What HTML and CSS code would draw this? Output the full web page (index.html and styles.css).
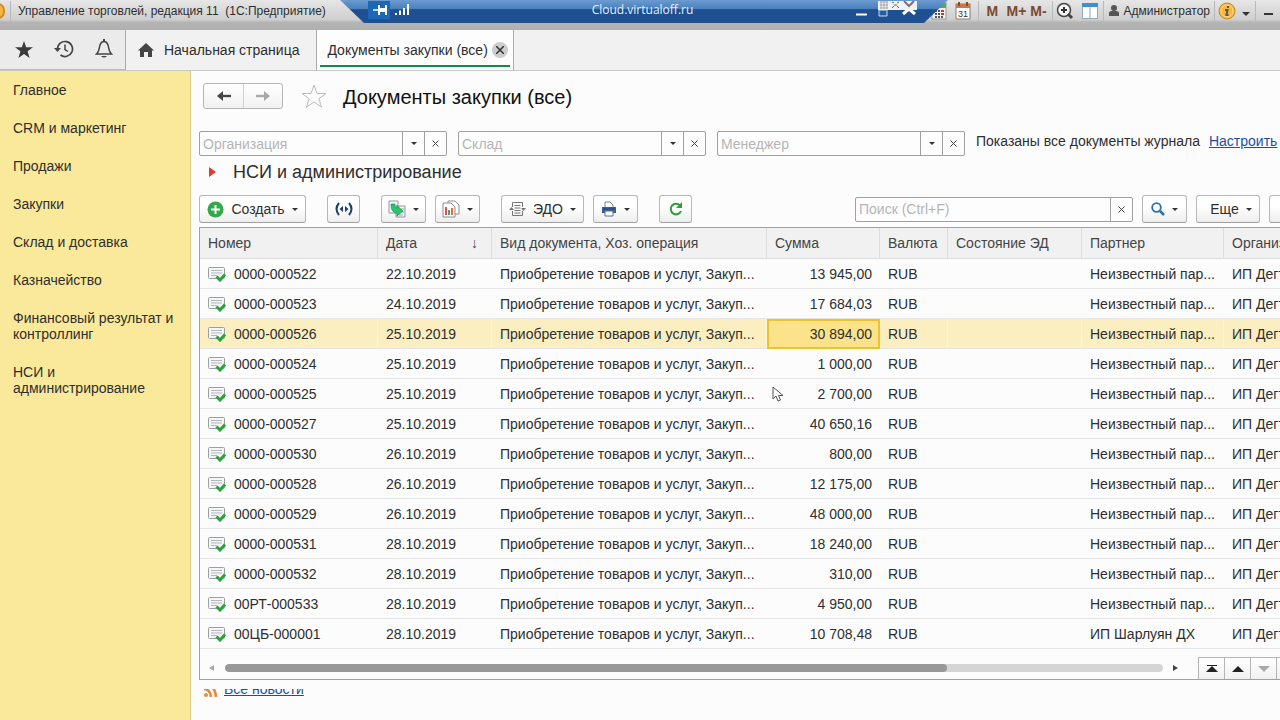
FILE: index.html
```html
<!DOCTYPE html>
<html lang="ru">
<head>
<meta charset="utf-8">
<title>Документы закупки (все)</title>
<link rel="stylesheet" href="styles.css">
<script src="app.js" defer></script>
</head>
<body>
<header class="titlebar">
  <span class="app-logo"></span>
  <span class="divider"></span>
  <span class="app-title">Управление торговлей, редакция 11&nbsp; (1С:Предприятие)</span>
  <div class="tools">
    <button class="tool" aria-label="Калькулятор"><svg width="16" height="18" viewBox="0 0 16 18"><rect x="1" y="1" width="14" height="16" fill="#f3f3f3" stroke="#999"/><path d="M2 1h13v5H2z" fill="#43b649"/><path d="M4 9h2M7 9h2M4 12h2M7 12h2M4 15h2M7 15h2M10 15h2" stroke="#555" stroke-width="2"/><path d="M10 9h3M10 12h3" stroke="#c33" stroke-width="2"/></svg></button>
    <button class="tool" aria-label="Календарь"><svg width="16" height="18" viewBox="0 0 16 18"><rect x="1" y="2" width="14" height="15" fill="#fff" stroke="#8a7a70"/><path d="M1 2h14v4H1z" fill="#c9794a"/><path d="M4 0v4M12 0v4" stroke="#8b4a25" stroke-width="2"/><text x="8" y="15" class="cal-day">31</text></svg></button>
    <span class="divider spaced"></span>
    <button class="tool memory first">M</button>
    <button class="tool memory">M+</button>
    <button class="tool memory">M-</button>
    <span class="divider spaced"></span>
    <button class="tool" aria-label="Масштаб"><svg width="18" height="18" viewBox="0 0 18 18"><circle cx="8" cy="8" r="6.500" fill="#f5f5f5" stroke="#444" stroke-width="1.500"/><path d="M5 8h6M8 5v6" stroke="#333" stroke-width="2"/><path d="M12 12l4 4" stroke="#444" stroke-width="3"/></svg></button>
    <button class="tool panel" aria-label="Панели"><svg width="16" height="16" viewBox="0 0 16 16"><path d="M.5.5h15v15H.5z" fill="#fff" stroke="#8fa9bd"/><path d="M0 0h16v4H0z" fill="#3f8fd0"/><path d="M8 4v12" stroke="#8fa9bd"/></svg></button>
    <span class="divider"></span>
    <button class="user"><svg width="10" height="12" viewBox="0 0 10 12"><circle cx="5" cy="3" r="3" fill="#555"/><path d="M0 11V8q0-2 3-2h4q3 0 3 2v3z" fill="#555"/></svg>Администратор</button>
    <span class="divider"></span>
    <button class="tool" aria-label="О программе"><svg width="18" height="18" viewBox="0 0 18 18"><circle cx="9" cy="9" r="8" fill="#f4b840" stroke="#c58a20"/><circle cx="9" cy="9" r="6" fill="none" stroke="#fbdc8b"/><path d="M7 8h2.500l-1 5h2M10 4v2" fill="none" stroke="#5d5a55" stroke-width="2"/></svg></button>
    <button class="tool narrow" aria-label="Меню"><span class="caret big"></span></button>
    <span class="divider spaced"></span>
    <button class="tool" aria-label="Свернуть"><span class="minimise"></span></button>
  </div>
  <div class="remote">
    <svg class="pins" width="44" height="18" viewBox="0 0 44 18"><path d="M0 0h22v18H0z" fill="#1c68b4"/><path d="M5 9h6" stroke="#fff" stroke-width="1.500"/><path d="M11 4v10M18 4v10" stroke="#fff" stroke-width="2"/><path d="M11 7h7v4h-7z" fill="#fff"/><path d="M28 14v-2M32 14V9.500M36 14V7M40 14V3" stroke="#fff" stroke-width="2"/></svg>
    <span class="remote-name">Cloud.virtualoff.ru</span>
    <svg class="remote-controls" width="70" height="18" viewBox="0 0 70 18"><path d="M3 13.500h11" stroke="#fff" stroke-width="2"/><path d="M26 9h8v6h-8z" fill="#2360a6" stroke="#c9dcf0"/><path d="M50 13l6-5 6 5" fill="none" stroke="#fff" stroke-width="3"/><path d="M25 0h39v9H25z" fill="#f2f2f2"/><path d="M27 1h8M27 4h8M27 7h8M28 0v8M31 0v8M34 0v8" stroke="#a9a9a9"/><path d="M39 1l2 1M46 1l-2 1M39 7l2-2M46 7l-2-2M41 4h3" stroke="#666"/><path d="M51 0l5 5 5-5" fill="none" stroke="#777" stroke-width="2"/></svg>
  </div>
</header>

<nav class="tabbar">
  <div class="quick">
    <button aria-label="Избранное"><svg width="18" height="17" viewBox="0 0 18 17"><path d="M9 0l2.200 6.200H18l-5.400 4 2 6.800L9 13l-5.600 4 2-6.800L0 6.200h6.800z" fill="#3c3c3c"/></svg></button>
    <button aria-label="История"><svg width="20" height="18" viewBox="0 0 20 18"><path d="M3.500 9a7.500 7.500 0 1 1 3 6" fill="none" stroke="#444" stroke-width="1.700"/><path d="M0 8h7l-3.500 4z" fill="#444"/><path d="M11 4.500V9.500l3 2" fill="none" stroke="#444" stroke-width="1.500"/></svg></button>
    <button aria-label="Уведомления"><svg width="18" height="20" viewBox="0 0 18 20"><path d="M1.500 15c3-2.500 2.500-6 3.500-9 .8-2.500 2-3.500 4-3.500s3.200 1 4 3.500c1 3 .5 6.500 3.500 9z" fill="none" stroke="#444" stroke-width="1.500"/><path d="M9 3V0" stroke="#444" stroke-width="2"/><path d="M6 17h6q-3 3-6 0" fill="#444"/></svg></button>
  </div>
  <a class="tab" href="#home"><svg width="16" height="14" viewBox="0 0 16 14"><path d="M8 0l8 7.500h-2V14h-4V9H6v5H2V7.500H0z" fill="#444"/></svg>Начальная страница</a>
  <div class="tab active"><a href="#docs">Документы закупки (все)</a><button class="close" aria-label="Закрыть"><svg width="8" height="8" viewBox="0 0 8 8"><path d="M0 0l8 8M8 0L0 8" stroke="#333" stroke-width="1.500"/></svg></button></div>
</nav>

<div class="workspace">
  <aside class="sidebar">
    <a href="#1">Главное</a>
    <a href="#2">CRM и маркетинг</a>
    <a href="#3">Продажи</a>
    <a href="#4">Закупки</a>
    <a href="#5">Склад и доставка</a>
    <a href="#6">Казначейство</a>
    <a href="#7">Финансовый результат и контроллинг</a>
    <a href="#8">НСИ и администрирование</a>
  </aside>

  <main class="content">
    <div class="heading">
      <div class="history">
        <button aria-label="Назад"><svg width="14" height="10" viewBox="0 0 14 10"><path d="M14 5H4" stroke="#444" stroke-width="2.400"/><path d="M0 5l6-5v10z" fill="#444"/></svg></button>
        <button aria-label="Вперед"><svg width="14" height="10" viewBox="0 0 14 10"><path d="M0 5h10" stroke="#a8a8a8" stroke-width="2.400"/><path d="M14 5L8 0v10z" fill="#a8a8a8"/></svg></button>
      </div>
      <button class="favorite" aria-label="В избранное"><svg width="26" height="24" viewBox="0 0 26 24"><path d="M13 1l3 8.500h9l-7.200 5.300 2.800 8.400L13 18l-7.600 5.200 2.800-8.400L1 9.500h9z" fill="none" stroke="#bbb"/></svg></button>
      <h1>Документы закупки (все)</h1>
    </div>

    <div class="filters">
      <div class="field"><input type="text" placeholder="Организация" aria-label="Организация"><button aria-label="Выбрать"><span class="caret"></span></button><button aria-label="Очистить"><svg width="7" height="7" viewBox="0 0 7 7"><path d="M.5.5l6 6M6.500.5l-6 6" stroke="#444"/></svg></button></div>
      <div class="field"><input type="text" placeholder="Склад" aria-label="Склад"><button aria-label="Выбрать"><span class="caret"></span></button><button aria-label="Очистить"><svg width="7" height="7" viewBox="0 0 7 7"><path d="M.5.5l6 6M6.500.5l-6 6" stroke="#444"/></svg></button></div>
      <div class="field"><input type="text" placeholder="Менеджер" aria-label="Менеджер"><button aria-label="Выбрать"><span class="caret"></span></button><button aria-label="Очистить"><svg width="7" height="7" viewBox="0 0 7 7"><path d="M.5.5l6 6M6.500.5l-6 6" stroke="#444"/></svg></button></div>
      <span class="status">Показаны все документы журнала</span>
      <a class="link" href="#setup">Настроить</a>
    </div>

    <button class="section"><svg width="7" height="10" viewBox="0 0 7 10"><path d="M0 0l7 5-7 5z" fill="#e23c2e"/></svg>НСИ и администрирование</button>

    <div class="toolbar">
      <button class="btn create"><svg width="17" height="17" viewBox="0 0 17 17"><circle cx="8.500" cy="8.500" r="8" fill="#35a84a"/><path d="M4 8.500h9M8.500 4v9" stroke="#fff" stroke-width="2"/></svg>Создать<span class="caret"></span></button>
      <button class="btn square" aria-label="Обмен"><svg width="18" height="14" viewBox="0 0 18 14"><path d="M4 1Q-1 7 4 13M14 1q5 6 0 12" fill="none" stroke="#17406a" stroke-width="2"/><path d="M8 4v6L4.500 7zM10 4v6l3.500-3z" fill="#17406a"/></svg></button>
      <div class="group">
        <button class="btn menu" aria-label="Создать на основании"><svg width="18" height="18" viewBox="0 0 18 18"><path d="M1 1h9v12H1zM8 6h9v11H8z" fill="#f4f6f8" stroke="#8d98a5"/><path d="M13 9h3M14 12h2M11 15h4" stroke="#9aa5b1"/><path d="M3 4h4c0 3 .5 4 2 4V5.500l6 5.500-6 5v-3C5 13 3 10 3 4z" fill="#2cc46c" stroke="#15884a" stroke-width=".6"/></svg><span class="caret"></span></button>
        <button class="btn menu" aria-label="Отчеты"><svg width="18" height="18" viewBox="0 0 18 18"><path d="M6 1h7l4 4v9H6z" fill="#fff" stroke="#8d8d8d"/><path d="M1 3h8l4 4v10H1z" fill="#fff" stroke="#8d8d8d"/><path d="M4 15V7" stroke="#d9534f" stroke-width="2"/><path d="M7 15v-5" stroke="#3a7" stroke-width="2"/><path d="M10 15V8" stroke="#e2703c" stroke-width="2"/></svg><span class="caret"></span></button>
      </div>
      <div class="group">
        <button class="btn edo"><svg width="17" height="16" viewBox="0 0 17 16"><path d="M3.500 6V1.500h10V6M3.500 10v4.500h10V10" fill="none" stroke="#777"/><path d="M5.500 4.500h6M5.500 7h6M5.500 9.500h6M5.500 12h6" stroke="#777"/><path d="M0 9h5L2.500 6zM12 7h5l-2.500 3z" fill="#777"/></svg>ЭДО<span class="caret"></span></button>
        <button class="btn menu" aria-label="Печать"><svg width="16" height="16" viewBox="0 0 16 16"><path d="M4 7V1h5l3 3v3" fill="#fff" stroke="#72839b"/><path d="M1 6h14v6H1z" fill="#3c5f93"/><path d="M2 8h12" stroke="#26446f"/><path d="M4 10h8v5H4z" fill="#fff" stroke="#526f98"/></svg><span class="caret"></span></button>
      </div>
      <button class="btn square" aria-label="Обновить"><svg width="14" height="14" viewBox="0 0 14 14"><path d="M11 3.500A5.300 5.300 0 1 0 12 9" fill="none" stroke="#2d9e38" stroke-width="2"/><path d="M13 0v6H7z" fill="#2d9e38"/></svg></button>
      <div class="group right">
        <div class="field search"><input type="text" placeholder="Поиск (Ctrl+F)" aria-label="Поиск"><button aria-label="Очистить"><svg width="7" height="7" viewBox="0 0 7 7"><path d="M.5.5l6 6M6.500.5l-6 6" stroke="#444"/></svg></button></div>
        <button class="btn menu" aria-label="Найти"><svg width="14" height="14" viewBox="0 0 14 14"><circle cx="5.500" cy="5.500" r="4.300" fill="none" stroke="#2b70ac" stroke-width="1.800"/><path d="M9 9l4 4" stroke="#2b70ac" stroke-width="2.500"/></svg><span class="caret"></span></button>
        <button class="btn more">Еще<span class="caret"></span></button>
        <button class="btn square" aria-label="Справка"></button>
      </div>
    </div>

    <div class="list">
      <table>
        <colgroup><col class="c-num"><col class="c-date"><col class="c-type"><col class="c-sum"><col class="c-cur"><col class="c-state"><col class="c-partner"><col class="c-org"></colgroup>
        <thead><tr><th>Номер</th><th><span class="sorted">Дата<span>↓</span></span></th><th>Вид документа, Хоз. операция</th><th>Сумма</th><th>Валюта</th><th>Состояние ЭД</th><th>Партнер</th><th>Организация</th></tr></thead>
        <tbody id="rows"></tbody>
      </table>
      <div class="list-foot">
        <span class="arrow left"></span>
        <div class="track"><div class="thumb"></div></div>
        <span class="arrow right"></span>
        <div class="pager">
          <button aria-label="В начало"><svg width="12" height="8" viewBox="0 0 12 8"><path d="M1 .5h10" stroke="#222"/><path d="M6 1l6 6H0z" fill="#222"/></svg></button>
          <button aria-label="Вверх"><svg width="12" height="6" viewBox="0 0 12 6"><path d="M6 0l6 6H0z" fill="#222"/></svg></button>
          <button aria-label="Вниз"><svg width="12" height="6" viewBox="0 0 12 6"><path d="M0 0h12L6 6z" fill="#aaa"/></svg></button>
          <button aria-label="В конец"></button>
        </div>
      </div>
    </div>

    <div class="news">
      <svg width="14" height="14" viewBox="0 0 14 14"><circle cx="3" cy="12" r="2" fill="#e8893a"/><path d="M1 6q6 0 7 8M1 1q11 0 12 13" fill="none" stroke="#e8893a" stroke-width="2.500"/></svg>
      <a class="link" href="#news">Все новости</a>
    </div>
  </main>
</div>
<svg class="pointer" width="12" height="16" viewBox="0 0 12 16"><path d="M1 1v12l3-3 2 5 2.500-1-2-4.500H11z" fill="#fff" stroke="#555"/></svg>
</body>
</html>
```
FILE: styles.css
```css
* { box-sizing: border-box; }
body {
  margin: 0;
  height: 100vh;
  display: flex;
  flex-direction: column;
  overflow: hidden;
  background: #fcfcfc;
  color: #2e2e2e;
  font: 14px/16px "Liberation Sans", Arial, sans-serif;
}
button, input { font: inherit; color: inherit; }
button { padding: 0; border: 0; background: none; display: flex; align-items: center; justify-content: center; white-space: nowrap; }
a { color: inherit; text-decoration: none; }
svg { flex: none; display: block; }

.titlebar {
  position: relative;
  flex: none;
  display: flex;
  height: 30px;
  padding-bottom: 9px;
  align-items: center;
  background: linear-gradient(#e6e6e6, #cfcfcf 65%, #b4b4b4 75%, #b0b0b0);
  overflow: hidden;
}
.app-logo { width: 14px; height: 16px; margin-left: -9px; border-radius: 8px; background: #f4b840; border: 2px solid #d08d2c; }
.divider { width: 1px; height: 20px; background: #b9b9b9; }
.titlebar > .divider { margin: 0 7px 0 5px; }
.app-title { font-size: 12px; white-space: nowrap; }
.divider.spaced { margin-left: 3px; }
.tools { margin-left: auto; display: flex; align-items: center; }
.tool { width: 24px; height: 20px; }
.tool.narrow { width: 13px; }
.tool.panel { width: 26px; }
.tool.memory { width: 22px; font-weight: bold; color: #7a4a2c; }
.tool.memory.first { width: 26px; }
.cal-day { font: 9px "Liberation Sans", Arial, sans-serif; text-anchor: middle; fill: #333; }
.user { gap: 4px; padding: 0 4px 0 5px; font-size: 12px; }
.minimise { width: 9px; height: 2px; background: #333; margin-top: 6px; }

.remote {
  position: absolute;
  top: 0;
  left: 340px;
  right: 332px;
  height: 23px;
  padding: 0 25px 4px 28px;
  display: flex;
  align-items: center;
  background: linear-gradient(#6b9bd0, #4b80bd 38%, #1d4f91 42%, #1f5092);
  clip-path: polygon(0 0, 100% 0, calc(100% - 24px) 100%, 24px 100%);
  color: #e6effa;
}
.remote-name { flex: 1; margin-left: 20px; text-align: center; font: 12px/16px "Open Sans", sans-serif; }

.caret { width: 0; height: 0; border: 3px solid transparent; border-top-color: #333; border-bottom: 0; }
.caret.big { border-width: 4px; border-bottom: 0; margin-top: 6px; }

.tabbar { flex: none; display: flex; height: 41px; background: #f1f1f1; border-bottom: 1px solid #c8c8c8; }
.quick { display: flex; width: 126px; padding-left: 4px; background: #ebebeb; border-right: 1px solid #a9a9a9; border-bottom: 1px solid #bbb; }
.quick button { width: 40px; height: 38px; }
.tab { display: flex; align-items: center; gap: 10px; height: 40px; padding: 0 17px 0 12px; border-right: 1px solid #a9a9a9; white-space: nowrap; }
.tab.active { gap: 4px; padding: 0 3px; background: linear-gradient(#0a9048, #0a9048) 3px 35px / calc(100% - 6px) 2px no-repeat #fdfdfd; }
.tab.active a { padding-left: 7px; }
.close { width: 16px; height: 16px; margin-right: 2px; border-radius: 8px; background: #cdcdcd; }

.workspace { flex: 1; display: flex; min-height: 0; }
.sidebar { flex: none; width: 191px; padding: 11px 12px 11px 13px; display: flex; flex-direction: column; gap: 22px; background: #fae99b; border-right: 1px solid #dccb8a; }
.content { flex: 1; min-width: 0; padding-left: 8px; overflow: hidden; }

.heading { display: flex; align-items: center; height: 26px; margin: 12px 0 22px 4px; }
.history { display: flex; height: 26px; border: 1px solid #b5b5b5; border-radius: 3px; background: linear-gradient(#fff, #f1f1f1); }
.history button { width: 39px; }
.history button + button { border-left: 1px solid #d0d0d0; }
.favorite { margin: 0 16px 0 18px; }
h1 { margin: 0; padding-top: 2px; font-size: 20px; line-height: 24px; font-weight: normal; color: #111; }

.filters { display: flex; align-items: center; gap: 11px; }
.field { flex: none; display: flex; width: 248px; height: 25px; border: 1px solid #a0a0a0; border-radius: 2px; background: #fdfdfd; }
.field input { flex: 1; min-width: 0; padding: 0 3px; border: 0; background: none; outline: 0; }
.field input::placeholder { color: #b5b5b5; opacity: 1; }
.field button { width: 22px; border-left: 1px solid #a0a0a0; }
.status, .filters .link { white-space: nowrap; padding-bottom: 6px; }
.filters .link { margin-left: -2px; }
.link { color: #1d4fa0; text-decoration: underline; }

.section { gap: 17px; margin: 6px 0 13px 10px; font-size: 18px; line-height: 20px; }

.toolbar { display: flex; align-items: center; gap: 21px; margin-right: -22px; }
.group { display: flex; align-items: center; gap: 9px; }
.group.right { margin-left: auto; }
.btn { flex: none; height: 28px; border: 1px solid #b8b8b8; border-bottom-color: #a0a0a0; border-radius: 3px; background: linear-gradient(#fff 40%, #ededed); }
.create { width: 107px; gap: 7px; }
.square { width: 33px; }
.menu { width: 45px; gap: 7px; }
.edo { width: 83px; gap: 7px; }
.more { width: 64px; gap: 7px; padding-left: 6px; }
.search { width: 278px; }

.list { margin-top: 4px; border: 1px solid #a0a0a0; border-right: 0; overflow: hidden; }
table { width: 1166px; table-layout: fixed; border-collapse: separate; border-spacing: 0; }
.c-num { width: 178px; }
.c-date { width: 114px; }
.c-sum { width: 113px; }
.c-type { width: 275px; }
.c-cur { width: 68px; }
.c-state { width: 134px; }
.c-partner, .c-org { width: 142px; }
th, td { padding: 0 8px; text-align: left; font-weight: normal; white-space: nowrap; }
th { height: 31px; color: #444; background: #f1f1f1; border-right: 1px solid #dcdcdc; border-bottom: 1px solid #dcdcdc; }
td { height: 30px; border-bottom: 1px solid #e6e6e6; }
.sorted { display: flex; justify-content: space-between; padding-right: 5px; }
.num { display: flex; align-items: center; gap: 7px; }
.sum { text-align: right; }
.selected td { background: #fbeec0; border-right: 1px solid #fdf4d2; }
.selected .sum { padding: 0 6px; background: #fbe38c; border: 2px solid #edc232; }

.list-foot { display: flex; align-items: center; height: 30px; padding-left: 9px; }
.arrow { margin-top: 7px; border: 3px solid transparent; }
.arrow.left { border-right: 5px solid #aaa; border-left: 0; }
.arrow.right { border-left: 5px solid #444; border-right: 0; }
.track { flex: 1; height: 8px; margin: 7px 10px 0 11px; border-radius: 4px; background: #d5d5d5; overflow: hidden; }
.thumb { width: 77%; height: 8px; border-radius: 4px; background: #989898; }
.pager { display: flex; align-self: flex-end; margin: 0 -22px 0 20px; }
.pager button { width: 26px; height: 22px; border: 1px solid #b5b5b5; border-right: 0; border-bottom: 0; background: linear-gradient(#fff, #f1f1f1); }

.news { display: flex; align-items: flex-end; gap: 7px; height: 8px; margin: 9px 0 0 4px; overflow: hidden; }

.pointer { position: absolute; left: 772px; top: 386px; }
```
FILE: app.js
```js
const TYPE = "Приобретение товаров и услуг, Закуп...";
const PARTNER = "Неизвестный пар...";
const docs = [
  ["0000-000522", "22.10.2019", "13 945,00"],
  ["0000-000523", "24.10.2019", "17 684,03"],
  ["0000-000526", "25.10.2019", "30 894,00"],
  ["0000-000524", "25.10.2019", "1 000,00"],
  ["0000-000525", "25.10.2019", "2 700,00"],
  ["0000-000527", "25.10.2019", "40 650,16"],
  ["0000-000530", "26.10.2019", "800,00"],
  ["0000-000528", "26.10.2019", "12 175,00"],
  ["0000-000529", "26.10.2019", "48 000,00"],
  ["0000-000531", "28.10.2019", "18 240,00"],
  ["0000-000532", "28.10.2019", "310,00"],
  ["00РТ-000533", "28.10.2019", "4 950,00"],
  ["00ЦБ-000001", "28.10.2019", "10 708,48", "ИП Шарлуян ДХ"]
];
const icon = '<svg width="19" height="16" viewBox="0 0 19 16"><rect x=".5" y="1.500" width="16" height="11" rx="1" fill="#f6f6f6" stroke="#9a9fa5"/><path d="M3 4.500h11M3 7h11M3 9.500h6" stroke="#b3b8bd"/><path d="M8.500 10.500l3.500 3.500 5-5.500" fill="none" stroke="#2ca33a" stroke-width="3"/></svg>';
document.getElementById("rows").innerHTML = docs.map(([num, date, sum, partner]) =>
  `<tr${num === "0000-000526" ? ' class="selected"' : ""}><td><span class="num">${icon}${num}</span></td><td>${date}</td><td>${TYPE}</td><td class="sum">${sum}</td><td>RUB</td><td></td><td>${partner || PARTNER}</td><td>ИП Дегтярев</td></tr>`
).join("");
```
